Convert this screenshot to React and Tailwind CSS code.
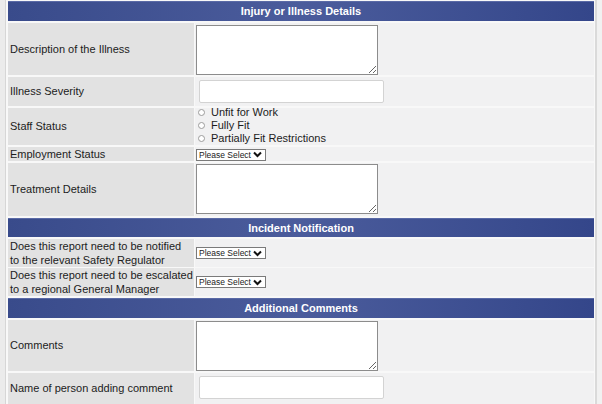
import React from "react";

function Header({ title }) {
  return (
    <div className="h-[20px] flex items-center justify-center bg-linear-to-r from-[#394b8b] via-[#4b5c9c] to-[#34468a] border-t border-[#5a6aa6] text-white font-bold text-[11px]">
      {title}
    </div>
  );
}

function Row({ label, h, children, valueClass = "" }) {
  return (
    <div className="grid grid-cols-[186px_1fr] gap-x-px" style={{ height: h }}>
      <div className="bg-[#e2e2e2] flex items-center pl-[2px] leading-[14px] whitespace-nowrap">
        {label}
      </div>
      <div className={`bg-[#f1f1f2] ${valueClass}`}>{children}</div>
    </div>
  );
}

function TextArea() {
  return (
    <textarea className="block w-[182px] h-[50px] border border-[#8c8c8c] bg-white outline-none" />
  );
}

function TextInput() {
  return (
    <input className="block w-[185px] h-[23px] border border-[#d3d3d3] rounded-[2px] bg-white outline-none" />
  );
}

function Select() {
  return (
    <div className="w-[70px] h-[12px] border border-[#7a7a7a] bg-white flex items-center justify-between pl-[2px] pr-[3px] text-[8.5px] leading-none text-[#222]">
      <span>Please Select</span>
      <svg width="9" height="7" viewBox="0 0 9 7">
        <path d="M1 1.5 L4.5 5 L8 1.5" fill="none" stroke="#111" strokeWidth="2" />
      </svg>
    </div>
  );
}

function Radio({ label }) {
  return (
    <div className="flex items-center h-[13px]">
      <span className="w-[7px] h-[7px] rounded-full border border-[#9c9c9c] bg-white ml-[3px] mr-[6px]" />
      <span>{label}</span>
    </div>
  );
}

export default function App() {
  return (
    <div className="w-[602px] h-[404px] overflow-hidden flex bg-[#f8f8f8] font-['Liberation_Sans',Arial,sans-serif] text-[11px] text-[#1c1c1c]">
      <div className="w-[6px] bg-[#ebebeb] border-r border-[#d6d6d6]" />
      <div className="ml-[2px] w-[586px] pt-px flex flex-col gap-[2px]">
        <Header title="Injury or Illness Details" />
        <Row label="Description of the Illness" h={52} valueClass="pl-px pt-[2px]">
          <TextArea />
        </Row>
        <Row label="Illness Severity" h={30} valueClass="pl-[4px] pt-[3px]">
          <TextInput />
        </Row>
        <Row label="Staff Status" h={37} valueClass="flex flex-col">
          <div className="-mt-[2px]">
            <Radio label="Unfit for Work" />
            <Radio label="Fully Fit" />
            <Radio label="Partially Fit Restrictions" />
          </div>
        </Row>
        <Row label="Employment Status" h={14} valueClass="pl-px pt-[2px]">
          <Select />
        </Row>
        <Row label="Treatment Details" h={54} valueClass="pl-px pt-[1px]">
          <TextArea />
        </Row>
        <Header title="Incident Notification" />
        <Row
          label={<span>Does this report need to be notified<br />to the relevant Safety Regulator</span>}
          h={27}
          valueClass="pl-px flex items-center"
        >
          <Select />
        </Row>
        <Row
          label={<span>Does this report need to be escalated<br />to a regional General Manager</span>}
          h={28}
          valueClass="pl-px flex items-center"
        >
          <Select />
        </Row>
        <Header title="Additional Comments" />
        <Row label="Comments" h={52} valueClass="pl-px pt-[1px]">
          <TextArea />
        </Row>
        <Row label="Name of person adding comment" h={32} valueClass="pl-[4px] pt-[3px]">
          <TextInput />
        </Row>
      </div>
      <div className="ml-px w-[2px] bg-[#dadada]" />
      <div className="flex-1 bg-[#f1f1f1]" />
    </div>
  );
}
